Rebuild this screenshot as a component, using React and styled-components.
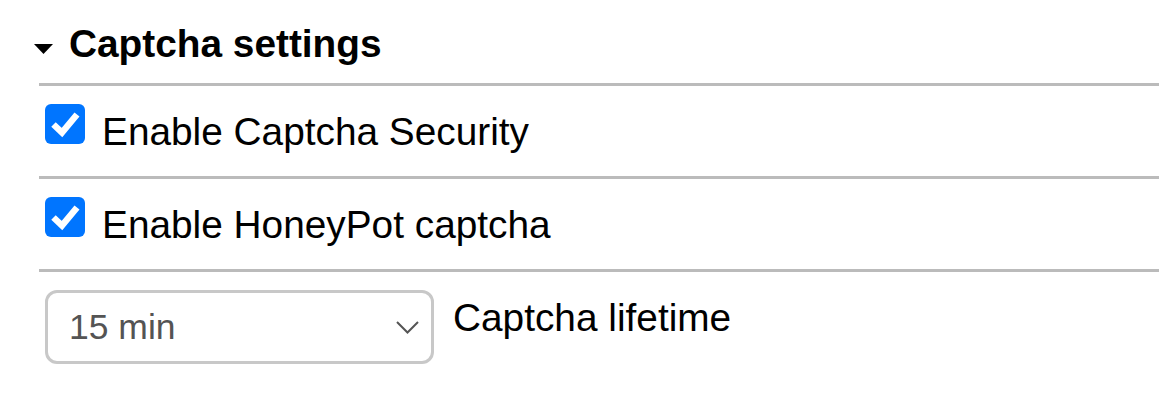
import React from "react";
import styled, { createGlobalStyle } from "styled-components";

const Global = createGlobalStyle`
  html, body { margin: 0; padding: 0; background: #fff; }
  body { font-family: "Liberation Sans", Arial, sans-serif; color: #000; }
`;

const Page = styled.div`
  padding-top: 21px;
  width: 1159px;
  height: 407px;
  box-sizing: border-box;
  overflow: hidden;
`;

const Summary = styled.div`
  display: flex;
  align-items: flex-start;
  padding-left: 34px;
  gap: 16px;
`;

const Disclosure = styled.svg`
  flex: none;
  margin-top: 23px;
`;

const Title = styled.h2`
  margin: 0;
  font-size: 38.8px;
  line-height: 45px;
  font-weight: 700;
`;

const Body = styled.div`
  margin: 17px 0 0 39px;
`;

const Row = styled.div`
  display: flex;
  align-items: flex-start;
  border-top: 3px solid #bbbbbb;
  height: ${(p) => p.$h}px;
  padding-left: 6px;
  gap: ${(p) => p.$gap}px;
`;

const Box = styled.span`
  flex: none;
  width: 40px;
  height: 40px;
  margin-top: 18px;
  border-radius: 6px;
  background: #0075ff;
  display: flex;
  align-items: center;
  justify-content: center;
`;

const Label = styled.span`
  margin-top: 23px;
  font-size: 38.8px;
  line-height: 45px;
`;

const Select = styled.div`
  flex: none;
  margin-top: 18px;
  width: 389px;
  height: 74px;
  box-sizing: border-box;
  border: 3px solid #c8c8c8;
  border-radius: 12px;
  padding: 0 12px 0 21px;
  display: flex;
  align-items: center;
  justify-content: space-between;
  color: #545454;
  font-size: 35.5px;
`;

const Check = ({ label }) => (
  <Row $h={90} $gap={17}>
    <Box>
      <svg width="40" height="40" viewBox="0 0 40 40">
        <path d="M8.5 20.5 L17 28.5 L32 10.5" fill="none" stroke="#fff" strokeWidth="6.5" strokeLinejoin="miter" />
      </svg>
    </Box>
    <Label>{label}</Label>
  </Row>
);

export default function App() {
  return (
    <>
      <Global />
      <Page>
        <Summary>
          <Disclosure width="19" height="10" viewBox="0 0 19 10">
            <polygon points="0,0 19,0 9.5,10" fill="#000" />
          </Disclosure>
          <Title>Captcha settings</Title>
        </Summary>
        <Body>
          <Check label="Enable Captcha Security" />
          <Check label="Enable HoneyPot captcha" />
          <Row $h={120} $gap={19}>
            <Select>
              <span>15 min</span>
              <svg width="23" height="13" viewBox="0 0 23 13">
                <path d="M1 1 L11.5 11.5 L22 1" fill="none" stroke="#555" strokeWidth="2" />
              </svg>
            </Select>
            <Label>Captcha lifetime</Label>
          </Row>
        </Body>
      </Page>
    </>
  );
}
